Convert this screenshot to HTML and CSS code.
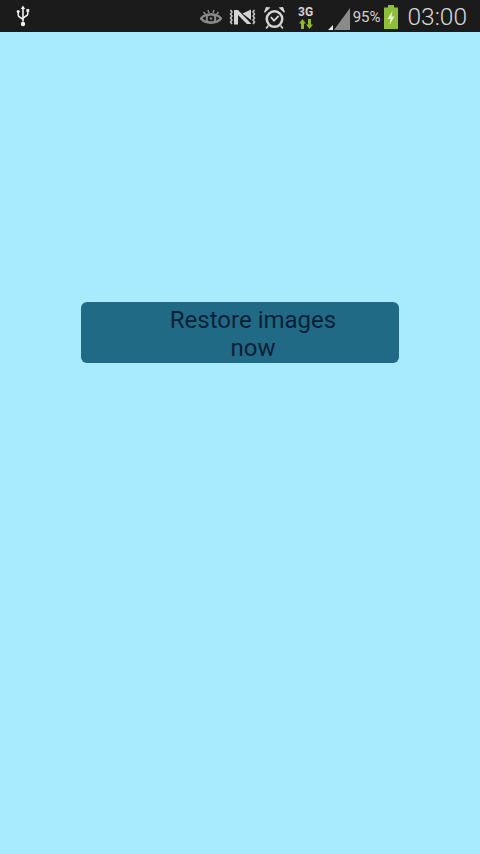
FILE: index.html
```html
<!DOCTYPE html>
<html lang="en">
<head>
<meta charset="utf-8">
<title>Restore images</title>
<link rel="stylesheet" href="styles.css">
</head>
<body>
<header class="status">
  <svg class="usb" width="16" height="24" viewBox="0 0 16 24"><path d="M8 1.500 5.800 5h1.400v12.600a4 4 0 0 0 1.600 0V5h1.400z" fill="#f2f2f2"/><path d="M3.200 8v3.200c0 2.400 4.800 2.600 4.800 4.800M12.800 7v3c0 2.400-4.800 2.600-4.800 4.800" fill="none" stroke="#f2f2f2" stroke-width="1.500"/><circle cx="3.200" cy="7.400" r="1.500" fill="#f2f2f2"/><rect x="11.400" y="5" width="2.800" height="2.800" fill="#f2f2f2"/><circle cx="8" cy="20" r="2.200" fill="#f2f2f2"/></svg>
  <div class="status-right">
    <svg class="eye" width="22" height="16" viewBox="0 0 22 16"><path d="M1 9.500C5 4 17 4 21 9.500 17 15 5 15 1 9.500z" fill="none" stroke="#8a8a8a" stroke-width="2.200"/><circle cx="11" cy="9.500" r="4.300" fill="none" stroke="#8a8a8a" stroke-width="2"/><circle cx="11" cy="9.500" r="1.200" fill="#8a8a8a"/><path d="M3.500 3 5.500 5.500M8 1 9 4M14 1 13 4M18.500 3 16.500 5.500" stroke="#8a8a8a" stroke-width="1.500"/></svg>
    <svg class="mute" width="27" height="16" viewBox="0 0 27 16"><path d="M5 1h4l13 13.500V15h-4L9 6v9.500H5z" fill="#d4d4d4"/><path d="M13.500 4.500 22 .5v10.500z" fill="#d4d4d4"/><path d="M1.500 1 3 3 1.500 5 3 7 1.500 9 3 11 1.500 13 3 15M25.500 1 24 3 25.500 5 24 7 25.500 9 24 11 25.500 13 24 15" fill="none" stroke="#c8c8c8" stroke-width="1.500"/></svg>
    <svg class="alarm" width="23" height="23" viewBox="0 0 22 22"><circle cx="11" cy="12.500" r="7.400" fill="none" stroke="#d4d4d4" stroke-width="2.400"/><path d="M7.500 10.500 10.500 14 15 9.500" fill="none" stroke="#d4d4d4" stroke-width="1.700"/><path d="M1.500 6 6 1.800 3.200 1.500zM20.500 6 16 1.800 18.800 1.500z" fill="#d4d4d4" stroke="#d4d4d4"/><path d="M5 19l-2 2.500M17 19l2 2.500" stroke="#d4d4d4" stroke-width="1.600"/></svg>
    <div class="net">
      <span class="net-label">3G</span>
      <svg width="16" height="10" viewBox="0 0 16 10"><path d="M3 10V4.500H1L4.500 0 8 4.500H6V10z" fill="#8fb92a"/><path d="M10 0v5.500H8L11.500 10 15 5.500h-2V0z" fill="#8fb92a"/></svg>
    </div>
    <svg class="signal" width="22" height="22" viewBox="0 0 22 22"><path d="M22 0v22H6z" fill="#8a8a8a"/><path d="M0 22 5 17v5z" fill="#e8e8e8"/></svg>
    <span class="pct">95%</span>
    <svg class="battery" width="16" height="24" viewBox="0 0 16 24"><path d="M5 0h6v2.500h4V24H1V2.500h4z" fill="#8fbf3a"/><path d="M9.500 6 4.500 14h3l-1 6 5-8.500h-3z" fill="#e6f2c8"/></svg>
    <time class="clock">03:00</time>
  </div>
</header>
<main class="content">
  <button class="restore" type="button">Restore images now</button>
</main>
</body>
</html>
```

FILE: styles.css
```css
* { box-sizing: border-box; }

html, body {
  margin: 0;
  height: 100%;
}

body {
  display: flex;
  flex-direction: column;
  width: 480px;
  height: 854px;
  overflow: hidden;
  background: #a8ebff;
  font-family: Roboto, "Liberation Sans", sans-serif;
}

.status {
  flex: none;
  display: flex;
  align-items: center;
  justify-content: space-between;
  height: 32px;
  padding: 0 13px 0 15px;
  background: #1c1b1b;
}

.usb { display: block; }

.status-right {
  display: flex;
  align-items: center;
}

.eye { margin-right: 7px; margin-top: 2px; }
.mute { margin-right: 7px; margin-top: 2px; }
.alarm { margin-right: 10px; margin-top: 3px; }
.signal { margin-left: 12px; margin-top: 6px; }

.net {
  display: flex;
  flex-direction: column;
  align-items: center;
  width: 20px;
  margin-top: 2px;
}

.net-label {
  font-size: 12px;
  font-weight: 700;
  line-height: 13px;
  color: #d4d4d4;
}

.pct {
  margin-left: 3px;
  font-size: 15px;
  color: #d2d2d2;
  margin-top: 2px;
}

.battery { margin-left: 3px; margin-top: 2px; }

.clock {
  margin-left: 8px;
  font-size: 24.5px;
  font-weight: 300;
  color: #d8d8d8;
}

.content {
  flex: 1;
  padding: 270px 81px 0;
}

.restore {
  display: block;
  width: 318px;
  height: 61px;
  padding: 3px 51px 0 77px;
  border: 0;
  border-radius: 6px;
  background: #206a85;
  color: #0b2138;
  font-family: inherit;
  font-size: 24px;
  line-height: 28px;
  text-align: center;
}
```
